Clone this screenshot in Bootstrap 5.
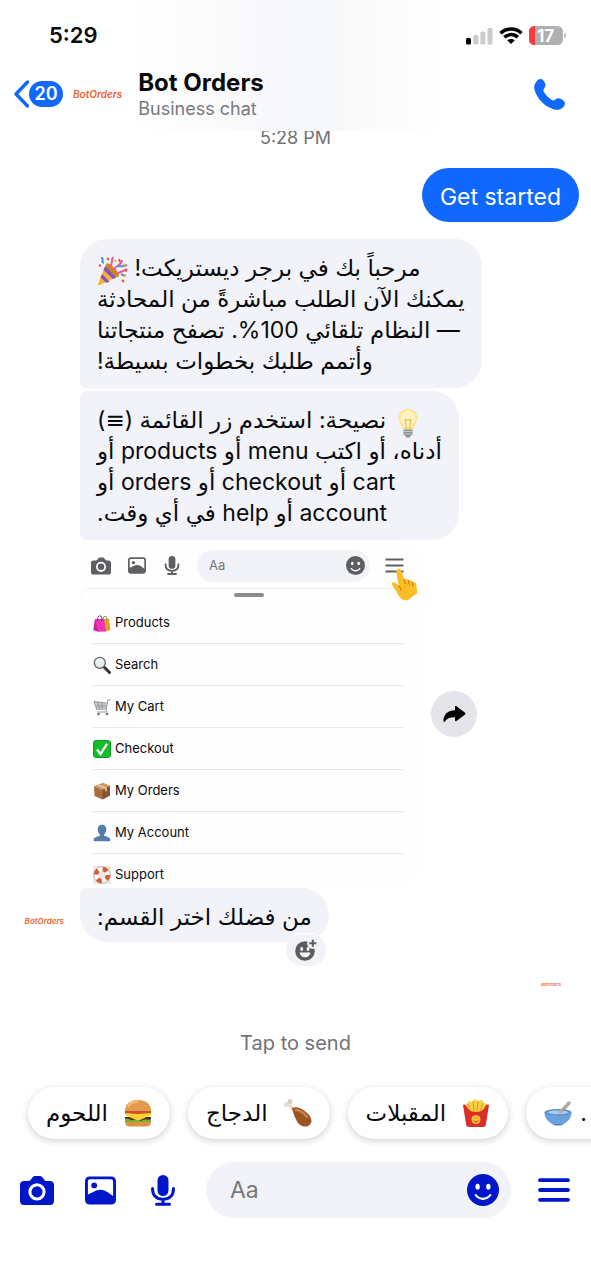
<!DOCTYPE html>
<html lang="en">
<head>
<meta charset="utf-8">
<meta name="viewport" content="width=device-width, initial-scale=1">
<title>Bot Orders</title>
<link href="https://cdn.jsdelivr.net/npm/bootstrap@5.3.0/dist/css/bootstrap.min.css" rel="stylesheet">
<style>
  :root { --accent:#1068ff; --deep:#0017c9; --bubble:#f1f3f8; }
  body { font-family:Inter,"DejaVu Sans",sans-serif; color:#0a0a0c; background:#fff; overflow-x:hidden; }
  svg { display:block; flex:none; }
  .icon-btn { border:0; background:none; padding:0; color:inherit; display:flex; flex:none; align-items:center; justify-content:center; }
  .topbar { height:131px; background:linear-gradient(90deg,#fff 22%,#f6f7f9 50%,#f8f9fa 58%,#fff 76%); }
  .statusbar { height:56px; padding:20px 24px 0 49px; }
  .clock { font-size:22px; font-weight:600; line-height:30px; }
  .titlebar { height:76px; padding:0 26px 0 13px; }
  .unread { width:34px; height:26px; background:var(--accent); color:#fff; font-size:18px; font-weight:600; line-height:26px; }
  .logo { font-style:italic; font-weight:600; color:#ea6430; line-height:12px; white-space:nowrap; }
  .logo-lg { font-size:10px; margin-left:10px; } .logo-md { font-size:8px; } .logo-sm { font-size:4px; }
  .name { font-size:24px; font-weight:700; line-height:30px; }
  .sub { font-size:18px; line-height:22px; color:#77797d; }
  .stamp { margin-top:-4px; font-size:18px; line-height:22px; color:#707276; }
  .thread { padding:0 12px 0 24px; }
  .sent, .bubble { border-radius:27px; font-size:23px; line-height:31px; padding:14px 17px 11px; white-space:nowrap; }
  .sent { background:var(--accent); color:#fff; margin-top:19px; padding:14px 18px 9px; }
  .stack { margin-left:56px; margin-top:17px; gap:3px; }
  .bubble { background:var(--bubble); text-align:left; }
  .bubble-first { border-bottom-left-radius:6px; }
  .bubble-mid { border-top-left-radius:6px; border-bottom-left-radius:6px; }
  .bubble-last { border-top-left-radius:6px; padding-bottom:9px; }
  .emo { display:inline-block; vertical-align:-5px; margin-top:-5px; margin-bottom:-5px; }
  .shot { width:344px; height:342px; overflow:hidden; border-radius:6px 27px 27px 6px; background:#fefefe; font-size:13px; }
  .shot-bar { height:45px; padding:0 20px 0 11px; color:#5d5f63; gap:17px; }
  .shot-field { height:32px; padding:0 5px 0 12px; margin-left:-1px; margin-right:-2px; background:var(--bubble); border-radius:16px; min-width:0; }
  .field { border:0; background:none; outline:0; flex:1 1 0; width:0; min-width:0; padding:0; color:#75777c; }
  .field::placeholder { color:#75777c; opacity:1; }
  .sheet { border-top:1px solid #ececee; border-radius:12px 12px 0 0; margin-right:6px; }
  .grip { width:30px; height:4px; border-radius:2px; background:#8b8b8d; margin:0 auto; }
  .sheet-list { padding:0 15px 0 13px; margin:5px 0 0; }
  .sheet-list li { height:42px; border-bottom:1px solid #e6e6e8; gap:4px; }
  .hand { position:absolute; left:309px; top:24px; }
  .share { width:46px; height:46px; border-radius:50%; background:#e3e5ea; margin-left:7px; color:#050505; }
  .react { position:absolute; right:2px; bottom:-25px; width:42px; height:34px; border-radius:17px; background:var(--bubble); border:1px solid #fff; color:#5b5d61; }
  .seen { margin-top:37px; padding-right:18px; }
  .hint { font-size:20px; line-height:28px; color:#707276; margin-top:38px; }
  .chips { gap:18px; padding:30px 0 23px 28px; overflow:hidden; }
  .chip { flex:none; height:52px; border:0; border-radius:26px; background:#fff; box-shadow:0 2px 7px rgba(0,0,0,.19); font-size:23px; padding:0 18px; gap:16px; white-space:nowrap; color:#0a0a0c; }
  .composer { padding:0 21px 60px 20px; gap:27px; color:var(--deep); }
  .entry { height:56px; border-radius:28px; background:var(--bubble); padding:0 12px 0 24px; min-width:0; }
  .entry .field { font-size:23px; }
</style>
</head>
<body>
<svg width="0" height="0" class="position-absolute" aria-hidden="true">
  <symbol id="camera" viewBox="0 0 34 29"><path fill="currentColor" fill-rule="evenodd" d="M4 5h4.500c1.500 0 2-.8 2.800-2C12.600.9 13.500 0 15 0h5c1.500 0 2.400.9 3.700 3 .8 1.200 1.300 2 2.800 2H30c2.500 0 4 1.500 4 4v16c0 2.500-1.500 4-4 4H4c-2.500 0-4-1.500-4-4V9c0-2.500 1.500-4 4-4zm13 2.300a8.600 8.600 0 1 0 0 17.200 8.600 8.600 0 0 0 0-17.200zm0 3a5.600 5.600 0 1 1 0 11.200 5.600 5.600 0 0 1 0-11.200z"/></symbol>
  <symbol id="photo" viewBox="0 0 32 29"><path fill="currentColor" fill-rule="evenodd" d="M5 0h22c3.300 0 5 1.700 5 5v19c0 3.300-1.700 5-5 5H5c-3.300 0-5-1.700-5-5V5c0-3.300 1.700-5 5-5zm.5 3C3.800 3 3 3.800 3 5.500v13c5-1.500 8-4.700 13-4.700s8 3.200 13 6.300V5.500C29 3.800 28.200 3 26.500 3z"/><circle cx="9.500" cy="9.300" r="3" fill="currentColor"/></symbol>
  <symbol id="mic" viewBox="0 0 24 31"><rect x="6.500" width="11" height="21" rx="5.500" fill="currentColor"/><path d="M1.500 13.500c0 7 4 10.800 10.500 10.800s10.500-3.800 10.500-10.800M12 24.500v5M5.500 29.300h13" fill="none" stroke="currentColor" stroke-width="3" stroke-linecap="round"/></symbol>
  <symbol id="smile" viewBox="0 0 31 31"><circle cx="15.500" cy="15.500" r="15.500" fill="currentColor"/><ellipse cx="10.300" cy="12.300" rx="2.100" ry="2.800" fill="#fff"/><ellipse cx="20.700" cy="12.300" rx="2.100" ry="2.800" fill="#fff"/><path d="M8.500 20.500c3.700 4.700 10.300 4.700 14 0" fill="none" stroke="#fff" stroke-width="2.200" stroke-linecap="round"/></symbol>
  <symbol id="menu" viewBox="0 0 32 24"><path d="M2 2.200h28M2 12h28M2 21.800h28" stroke="currentColor" stroke-width="3.800" stroke-linecap="round"/></symbol>
</svg>

<header class="topbar sticky-top">
  <div class="statusbar d-flex justify-content-between align-items-start">
    <span class="clock">5:29</span>
    <svg class="mt-1" width="101" height="22" viewBox="0 0 101 22" aria-label="Status">
      <g transform="translate(0 1)"><rect y="13" width="5" height="6.500" rx="1.500" fill="#000"/><g fill="#cbcbcd"><rect x="7.300" y="10" width="5" height="9.500" rx="1.500"/><rect x="14.400" y="6.500" width="5" height="13" rx="1.500"/><rect x="21.500" y="3" width="5" height="16.500" rx="1.500"/></g>
      <g fill="none" stroke="#000" stroke-width="3.500"><path d="M34.500 8.200c6-5.600 15.500-5.600 21 0"/><path d="M38.300 12.300c3.900-3.600 9.700-3.600 13.400 0"/></g><path d="M41.200 15.300c2.100-1.800 5.500-1.800 7.600 0L45 19z"/></g>
      <g transform="translate(0 1)"><rect x="63" y="1" width="34" height="19" rx="5.500" fill="#b0b0b2"/><path d="M68.500 1H69v19h-.5A5.500 5.500 0 0 1 63 14.500v-8A5.500 5.500 0 0 1 68.500 1z" fill="#fb3b3f"/><path d="M98.300 7.500c2.300.8 2.300 5.200 0 6z" fill="#b0b0b2"/>
      <text x="79.500" y="16.500" text-anchor="middle" font-family="Inter,sans-serif" font-size="17" font-weight="700" fill="#fff">17</text></g>
    </svg>
  </div>
  <div class="titlebar d-flex align-items-center">
    <button class="icon-btn" aria-label="Back, 20 unread">
      <svg width="16" height="28" viewBox="0 0 16 28"><path d="M14.500 2 3 14l11.500 12" fill="none" stroke="#1068ff" stroke-width="3.400" stroke-linecap="round" stroke-linejoin="round"/></svg>
      <span class="unread rounded-pill text-center">20</span>
    </button>
    <span class="logo logo-lg">BotOrders</span>
    <div class="ms-3 flex-grow-1">
      <div class="name">Bot Orders</div>
      <div class="sub">Business chat</div>
    </div>
    <button class="icon-btn" aria-label="Call">
      <svg width="31" height="31" viewBox="0 0 31 31"><path fill="#1068ff" d="M2.700 2.200C5-.7 8.400-.6 10.200 2.600c1.600 2.800 1.700 4.500.1 6.700-1.100 1.500-1.100 2.500-.2 4 1.700 2.900 4.200 5.400 7.200 7.400 1.500 1 2.600.9 4-.2 2.200-1.700 4-1.600 6.700-.1 3.400 1.900 3.900 4.800 1.400 7.600-2.200 2.500-5.600 3.500-9.500 2.400C10.800 27.800 3.200 20.100.6 11.100-.4 7.500.4 4.900 2.700 2.200z"/></svg>
    </button>
  </div>
</header>

<main>
  <div class="stamp text-center">5:28 PM</div>
  <section class="thread">
    <div class="d-flex justify-content-end"><div class="sent">Get started</div></div>

    <div class="stack d-flex flex-column align-items-start">
      <div class="bubble bubble-first" dir="rtl" lang="ar">
        <div>مرحباً بك في برجر ديستريكت! <svg class="emo" width="31" height="30" viewBox="0 0 31 30"><path d="M9 8 1 28c-.3 1 .4 1.500 1.300 1.200L22 20c2-3-9-14-13-12z" fill="#f6b62c"/><path d="m6.500 14 9.500 9 3.500-1.500L8.500 9.500zM3.500 21.500l6 5.500 3-1.500-7.500-7.500z" fill="#8d4fc0"/><ellipse cx="15.500" cy="14" rx="2.600" ry="9" transform="rotate(-43 15.500 14)" fill="#c88a1f"/><path d="M13 11c3-3 1-6 3-10M17 14c3-7 7-3 8-10M20 18c3-3 6-2 10-5" fill="none" stroke="#e9569d" stroke-width="2"/><path d="M4 2c4 0-1 4 3 5M20 10c4 0 5 1 10-1M24 18l4 2" fill="none" stroke="#4b8fe2" stroke-width="2"/><path d="M10 2l2 2M28 14l2 1M22 3l1 3M25 24l2 2M2 9l2 1" stroke="#ef5145" stroke-width="2"/><path d="M26 8l2 2M18 4l1 2M27 20l2-1" stroke="#f2b42e" stroke-width="2"/></svg></div>
        <div>يمكنك الآن الطلب مباشرةً من المحادثة</div>
        <div>— النظام تلقائي 100%. تصفح منتجاتنا</div>
        <div>وأتمم طلبك بخطوات بسيطة!</div>
      </div>
      <div class="bubble bubble-mid" dir="rtl" lang="ar">
        <div><svg class="emo" width="30" height="30" viewBox="0 0 30 30"><path d="M15 1c6 0 9.500 4.300 9.500 9.500 0 5-4 7-5 11.500h-9c-1-4.500-5-6.500-5-11.500C5.500 5.300 9 1 15 1z" fill="#fbe58d"/><path d="M15 3c5 0 7.500 3.500 7.500 7.500 0 3-3 5-4 8.500h-7c-1-3.500-4-5.500-4-8.500C7.500 6.500 10 3 15 3z" fill="#fff5c2"/><path d="m12 11 1.500 10M18 11l-1.500 10M12 11l1.500 2 1.500-2 1.500 2 1.500-2" fill="none" stroke="#e1b545"/><path d="M10.500 21.500h9v4c0 1.500-1 2-2 2.500l-1 1.500h-3L12.500 28c-1-.5-2-1-2-2.500z" fill="#8e9294"/><path d="M10.500 23.500h9M11 26h8" stroke="#c9cccd"/></svg> نصيحة: استخدم زر القائمة (≡)</div>
        <div>أدناه، أو اكتب menu أو products أو</div>
        <div>cart أو checkout أو orders أو</div>
        <div>account أو help في أي وقت.</div>
      </div>

      <div class="d-flex align-items-center">
        <div class="shot position-relative">
          <div class="shot-bar d-flex align-items-center">
            <svg width="20" height="18"><use href="#camera"/></svg>
            <svg width="18" height="17"><use href="#photo"/></svg>
            <svg width="18" height="19"><use href="#mic"/></svg>
            <div class="shot-field d-flex align-items-center flex-grow-1">
              <input class="field" placeholder="Aa" aria-label="Message preview" readonly>
              <svg width="19" height="19"><use href="#smile"/></svg>
            </div>
            <svg width="19" height="15" viewBox="0 0 19 15"><path d="M.5 1.500h18M.5 7.500h18M.5 13.500h18" stroke="currentColor" stroke-width="1.800"/></svg>
          </div>
          <svg class="hand" width="29" height="34" viewBox="0 0 29 34"><path d="M9 2c1.800-.5 3 .5 3.500 2.300l2.700 8c2-.8 3.600-.3 4.300 1.200 2-.8 3.600 0 4 1.700 2-.6 3.500.5 3.800 2.600l1 8.200-10 7.400c-5-.3-7.600-2.400-9.500-6.500L3 17.500c-.8-2.200 2-3.300 3.700-1.400l3 3L7.300 4.700C7 3.200 7.600 2.300 9 2z" fill="#fbbd27"/><path d="M15 12.500l1.400 4.300M19.400 13.500l1 3.800M23.400 15.300l.6 3.500M9.500 19c1.500 1 2.500 2.500 2.400 4.500" fill="none" stroke="#cf8417" stroke-width="1.200" stroke-linecap="round"/></svg>
          <div class="sheet pt-1">
            <div class="grip"></div>
            <ul class="sheet-list list-unstyled">
              <li class="d-flex align-items-center"><svg width="18" height="18" viewBox="0 0 18 18"><path d="M8 5h8l1.500 11-5 1.500L8 16z" fill="#e0a32a"/><path d="M10 6c0-5 4-5 4 0" fill="none" stroke="#9b6a1a"/><path d="M2 5h9l2 12.500-8 .3L.5 16z" fill="#ee35b8"/><path d="m2 5 3 12.500L.5 16z" fill="#c6259d"/><path d="M4.500 7c-.5-7 5-7 4.500 0" fill="none" stroke="#7d2c74"/></svg>Products</li>
              <li class="d-flex align-items-center"><svg width="18" height="18" viewBox="0 0 18 18"><path d="m10.500 10.500 6 6" stroke="#333" stroke-width="3" stroke-linecap="round"/><circle cx="6.800" cy="6.800" r="5.500" fill="#e4eef2" stroke="#646464" stroke-width="1.300"/><path d="M4 6c0-2 1.500-3 3-3" fill="none" stroke="#fff" stroke-width="1.500"/></svg>Search</li>
              <li class="d-flex align-items-center"><svg width="18" height="18" viewBox="0 0 18 18"><path d="M1 3.500 13.500 5 13 12H4z" fill="#c5c9cd"/><path d="M17.500 2H15l-2 10 1 2H4.500M1 3.500 4 12M1 3.500 13.500 5M2.500 8h11M5 4l1.500 8M9 4.500V12" fill="none" stroke="#92979c"/><circle cx="5.500" cy="16" r="1.300" fill="#6b6e72"/><circle cx="14" cy="16" r="1.300" fill="#6b6e72"/></svg>My Cart</li>
              <li class="d-flex align-items-center"><svg width="18" height="18" viewBox="0 0 18 18"><rect x=".5" y=".5" width="17" height="17" rx="2.500" fill="#17bd2c" stroke="#0d9c22"/><path d="m4 9.500 3.500 4.500L14 3.800" fill="none" stroke="#fff" stroke-width="2.200"/></svg>Checkout</li>
              <li class="d-flex align-items-center"><svg width="18" height="18" viewBox="0 0 18 18"><path d="M1 4.500 10 1l7 3v9.500L9.500 17.500 1.500 14z" fill="#a86e42"/><path d="M1 4.500 10 1l7 3-7.500 4z" fill="#cf9a68"/><path d="M9.500 8 17 4v9.500l-7.500 4z" fill="#865230"/><path d="m5 3 8 3.200v3" fill="none" stroke="#e8c99c" stroke-width="1.600"/></svg>My Orders</li>
              <li class="d-flex align-items-center"><svg width="18" height="18" viewBox="0 0 18 18"><path d="M9 .8c3 0 4.500 2 4.300 5-.1 2-1 3.800-2.200 4.600v1.400c2.500.8 5.700 1.400 6.200 3.400.2 1-.2 2-.2 2H.9s-.5-1-.2-2c.5-2 3.700-2.600 6.200-3.400v-1.400C5.700 9.600 4.800 7.800 4.700 5.800 4.500 2.800 6 .8 9 .8z" fill="#567ea8"/></svg>My Account</li>
              <li class="d-flex align-items-center"><svg width="18" height="18" viewBox="0 0 18 18"><rect width="18" height="18" rx="2" fill="#eee7e3"/><circle cx="9" cy="9" r="6" fill="none" stroke="#fff" stroke-width="4.500"/><circle cx="9" cy="9" r="6" fill="none" stroke="#db5a38" stroke-width="4.500" stroke-dasharray="4.710 4.710"/><circle cx="9" cy="9" r="8.300" fill="none" stroke="#a7846f" stroke-width=".6"/></svg>Support</li>
            </ul>
          </div>
        </div>
        <button class="icon-btn share" aria-label="Share">
          <svg width="23" height="16" viewBox="0 0 23 16"><path fill="currentColor" d="M12 .8c0-.8.9-1.100 1.500-.6l8.600 6.600c.6.500.6 1.100 0 1.600l-8.600 6.600c-.6.500-1.500.2-1.500-.6v-3.200c-4.700-.2-8 .8-9.800 4.100-.5.900-1.800.8-1.800-.3C.3 9 4.600 4.200 12 4.200z"/></svg>
        </button>
      </div>

      <div class="d-flex position-relative">
        <span class="logo logo-md position-absolute top-50 end-100 me-3">BotOrders</span>
        <div class="bubble bubble-last" dir="rtl" lang="ar">من فضلك اختر القسم:</div>
        <button class="icon-btn react" aria-label="Add reaction">
          <svg width="22" height="22" viewBox="0 0 22 22"><circle cx="10" cy="12" r="9.800" fill="currentColor"/><circle cx="17.500" cy="4.500" r="5.300" fill="#f1f3f8"/><path d="M17.800.8v7M14.300 4.300h7" stroke="currentColor" stroke-width="2"/><ellipse cx="6.700" cy="10" rx="1.400" ry="1.900" fill="#fff"/><ellipse cx="13" cy="10" rx="1.400" ry="1.900" fill="#fff"/><path d="M4.600 13.500h10.800c-.4 3-2.500 4.700-5.400 4.700s-5-1.700-5.400-4.700z" fill="#fff"/></svg>
        </button>
      </div>
    </div>
    <div class="seen text-end"><span class="logo logo-sm d-block">BotOrders</span></div>
  </section>

  <div class="hint text-center">Tap to send</div>

  <div class="chips d-flex">
    <button class="chip d-flex align-items-center" dir="rtl" lang="ar"><svg width="28" height="28" viewBox="0 0 28 28"><path d="M1 12C1 5 6 1 14 1s13 4 13 11z" fill="#e39a4c"/><path d="M4 8c2-4 6-5.500 10-5.500" stroke="#f5c27f" stroke-width="2" fill="none"/><path d="M1 12h26v3H1z" fill="#cf4c2d"/><path d="M1 18h26v4H1z" fill="#4b2b18"/><path d="m1 14 13 1 13-1 0 2-13 6L1 16z" fill="#ffd02f"/><path d="M1 20c4-2 5 2 9 1s5 2 9 0 5 1 8-1v3H1z" fill="#72b52f"/><path d="M1 23h26c0 3-2 4.500-5 4.500H6c-3 0-5-1.500-5-4.500z" fill="#dd9145"/></svg>اللحوم</button>
    <button class="chip d-flex align-items-center" dir="rtl" lang="ar"><svg width="28" height="28" viewBox="0 0 28 28"><path d="m5 6 7 7" stroke="#e5ddd0" stroke-width="3.500"/><circle cx="2.500" cy="5.500" r="2.500" fill="#e5ddd0"/><circle cx="6" cy="2.500" r="2.500" fill="#d8cfc0"/><path d="M8 9c4-2 9-.5 14 4 6 5 7 10 3.500 13-4 3-10 1.500-13-4.500C10 17 9 13 8 9z" fill="#9c5423"/><path d="M12 11c4 0 8 3 11 7" fill="none" stroke="#c98245" stroke-width="2.500" stroke-linecap="round"/></svg>الدجاج</button>
    <button class="chip d-flex align-items-center" dir="rtl" lang="ar"><svg width="28" height="28" viewBox="0 0 28 28"><path d="m4 5 3-3 3 1 3-3 3 2 4-1 2 3 3 1-2 11H6z" fill="#fbcf45"/><path d="m6 5 3 9M11 2l1 11M16 2l-1 11M21 4l-3 9" stroke="#da9a22" stroke-width="1"/><path d="M1 6c2-1 3 0 4 2 2 4 5 5 9 5s7-1 9-5c1-2 2-3 4-2l-3 19c-.3 2-1 3-3 3H7c-2 0-2.700-1-3-3z" fill="#d92f2a"/><circle cx="14" cy="20.500" r="4.500" fill="#f9c236"/><path d="M11.500 21.500c1.500 2 3.500 2 5 0M12 19h.5M15.500 19h.5" stroke="#b1431c" fill="none"/></svg>المقبلات</button>
    <button class="chip d-flex align-items-center gap-2"><svg width="28" height="28" viewBox="0 0 28 28"><path d="M16 14 25 4" stroke="#b7a8a4" stroke-width="3.500" stroke-linecap="round"/><ellipse cx="14" cy="13.500" rx="13.500" ry="3.500" fill="#5588c4"/><ellipse cx="14" cy="13.300" rx="11" ry="2" fill="#a9c9ea"/><path d="M.5 13.500C3 17.500 25 17.500 27.500 13.500c0 6-4 9.500-8 11.500h-11c-4-2-8-5.500-8-11.500z" fill="#69a2df"/><path d="M8.500 25c2 2 9 2 11 0z" fill="#487fc0"/><path d="m15.500 14 3-3.500" stroke="#b7a8a4" stroke-width="3"/></svg><span class="pe-5">.</span></button>
  </div>

  <form class="composer d-flex align-items-center" onsubmit="return false">
    <button type="button" class="icon-btn" aria-label="Camera"><svg width="34" height="29"><use href="#camera"/></svg></button>
    <button type="button" class="icon-btn px-1" aria-label="Photos"><svg width="31" height="29"><use href="#photo"/></svg></button>
    <button type="button" class="icon-btn px-1" aria-label="Voice"><svg width="24" height="31"><use href="#mic"/></svg></button>
    <div class="entry d-flex align-items-center flex-grow-1">
      <input class="field" type="text" placeholder="Aa" aria-label="Message">
      <button type="button" class="icon-btn" aria-label="Emoji"><svg width="32" height="32"><use href="#smile"/></svg></button>
    </div>
    <button type="button" class="icon-btn" aria-label="Menu"><svg width="32" height="24"><use href="#menu"/></svg></button>
  </form>
</main>
<script src="https://cdn.jsdelivr.net/npm/bootstrap@5.3.0/dist/js/bootstrap.bundle.min.js"></script>
</body>
</html>
